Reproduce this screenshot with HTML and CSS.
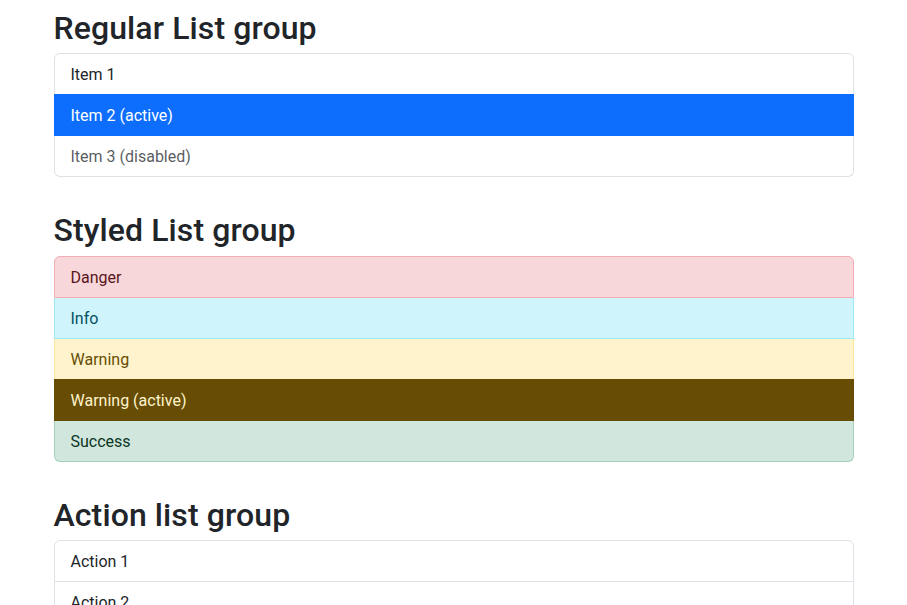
FILE: index.html
```html
<!DOCTYPE html>
<html lang="en">
<head>
<meta charset="utf-8">
<title>List groups</title>
<link rel="stylesheet" href="styles.css">
</head>
<body>
<div class="page">
	<h2>Regular List group</h2>
	<ul class="list-group">
		<li class="list-group-item">Item 1</li>
		<li class="list-group-item active">Item 2 (active)</li>
		<li class="list-group-item disabled">Item 3 (disabled)</li>
	</ul>

	<h2>Styled List group</h2>
	<ul class="list-group">
		<li class="list-group-item item-danger">Danger</li>
		<li class="list-group-item item-info">Info</li>
		<li class="list-group-item item-warning">Warning</li>
		<li class="list-group-item item-warning active">Warning (active)</li>
		<li class="list-group-item item-success">Success</li>
	</ul>

	<h2>Action list group</h2>
	<div class="list-group">
		<a href="#" class="list-group-item item-action">Action 1</a>
		<a href="#" class="list-group-item item-action">Action 2</a>
		<a href="#" class="list-group-item item-action">Action 3</a>
	</div>
</div>
</body>
</html>
```

FILE: styles.css
```css
*{ box-sizing:border-box;}
html{ overflow:hidden;}
body{ margin:0; font:16px/1.5 "Segoe UI",Roboto,"Liberation Sans",sans-serif; color:#212529; background:#fff;}
.page{ max-width:800px; margin:0 auto; padding-top:7px;}
h2{ margin:0 0 6px; padding-top:2px; font-size:32px; font-weight:500; line-height:1.2; letter-spacing:.1px;}

.list-group{ display:flex; flex-direction:column; margin:0 0 32px; padding:0; border-radius:6px; list-style:none;}
.list-group-item{ position:relative; display:block; padding:9px 16px 7px; color:#212529; text-decoration:none; background:#fff; border:1px solid #dee2e6;}
.list-group-item:first-child{ border-top-left-radius:inherit; border-top-right-radius:inherit;}
.list-group-item:last-child{ border-bottom-left-radius:inherit; border-bottom-right-radius:inherit;}
.list-group-item + .list-group-item{ border-top-width:0;}

.list-group-item.disabled{ color:rgba(33,37,41,.75); pointer-events:none;}
.list-group-item.active{ z-index:2; color:#fff; background:#0d6efd; border-color:#0d6efd;}
.list-group-item + .list-group-item.active{ margin-top:-1px; border-top-width:1px;}

.item-danger{ color:#58151c; background:#f8d7da; border-color:#f1aeb5;}
.item-info{ color:#055160; background:#cff4fc; border-color:#9eeaf9;}
.item-warning{ color:#664d03; background:#fff3cd; border-color:#ffe69c;}
.item-warning.active{ color:#fff3cd; background:#664d03; border-color:#664d03;}
.item-success{ color:#0a3622; background:#d1e7dd; border-color:#a3cfbb;}

.item-action{ width:100%; text-align:inherit;}
.item-action:hover{ background:#f8f9fa;}
```
